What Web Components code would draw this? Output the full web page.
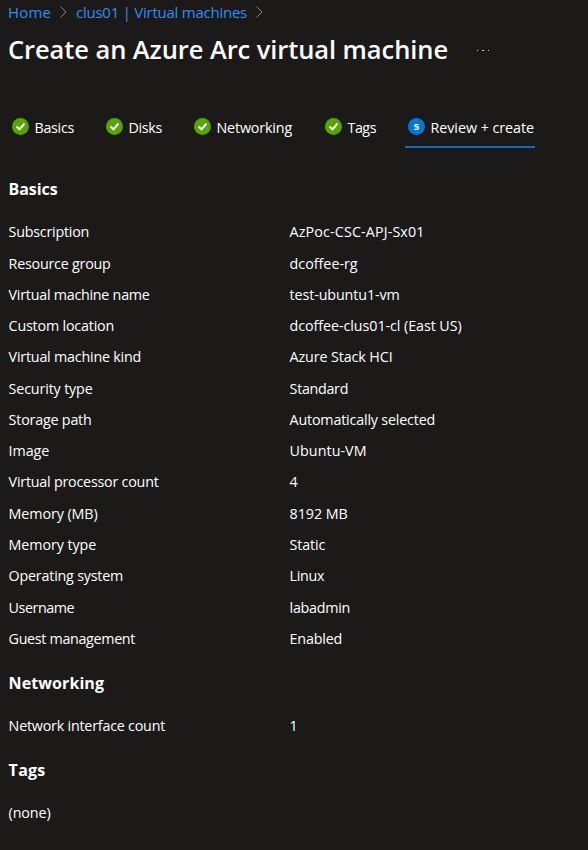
<!DOCTYPE html>
<html lang="en">
<head>
<meta charset="utf-8">
<title>Create an Azure Arc virtual machine</title>
<style>
html, body { margin: 0; background: #1b1a19; }
body { font-family: "Open Sans", "Noto Sans", sans-serif; color: #fff; }
</style>
</head>
<body>
<vm-page></vm-page>
<script>
/* Text run whose tracking is adjusted so that it is "w" pixels wide. */
class FitText extends HTMLElement {
  connectedCallback() {
    if (this.shadowRoot) return;
    this.attachShadow({ mode: 'open' }).innerHTML =
      '<style>:host{display:inline-block;white-space:pre}span{display:inline-block}</style><span><slot></slot></span>';
    const span = this.shadowRoot.querySelector('span');
    const w = parseFloat(this.getAttribute('w'));
    const n = this.textContent.length;
    if (w) span.style.letterSpacing = ((w - span.getBoundingClientRect().width) / n).toFixed(3) + 'px';
  }
}

class CrumbSeparator extends HTMLElement {
  constructor() {
    super();
    this.attachShadow({ mode: 'open' }).innerHTML = `<style>
      :host{display:block;width:7px;height:12px}svg{display:block}</style>
      <svg width="7" height="12" viewBox="0 0 7 12" fill="none" stroke="#8a8886" stroke-width="1"><path d="M.6 .7 6 6 .6 11.3"/></svg>`;
  }
}

class WizardStep extends HTMLElement {
  connectedCallback() {
    if (this.shadowRoot) return;
    const num = this.getAttribute('number');
    const icon = num
      ? `<span class="num">${num}</span>`
      : `<svg width="17" height="17" viewBox="0 0 17 17"><circle cx="8.5" cy="8.5" r="8.5" fill="#57a300"/><path d="M4.5 8.6 7.5 11.3 12.5 5.5" fill="none" stroke="#fff" stroke-width="2"/></svg>`;
    this.attachShadow({ mode: 'open' }).innerHTML = `<style>
      :host{display:flex;box-sizing:border-box;height:40px;padding:10px 3px 0;gap:5.5px;font-size:14.3px;line-height:20px;border-bottom:2px solid transparent}
      :host([number]){border-color:#0f6cbd}
      svg,.num{display:block;flex:none}
      .num{width:17px;height:17px;border-radius:50%;background:#0078d4;text-align:center;font-size:9.5px;font-weight:700;line-height:17px}
      slot{display:block}
      </style>${icon}<slot></slot>`;
  }
}

class SummarySection extends HTMLElement {
  constructor() {
    super();
    this.attachShadow({ mode: 'open' }).innerHTML = `<style>
      :host{display:block}
      h2{margin:0 0 17px;font-size:16px;font-weight:700;line-height:22px}
      </style><h2><slot name="title"></slot></h2><slot></slot>`;
  }
}

class SummaryRow extends HTMLElement {
  constructor() {
    super();
    this.attachShadow({ mode: 'open' }).innerHTML = `<style>
      :host{display:grid;grid-template-columns:281px 1fr;height:31.29px;align-items:center;font-size:14.3px;line-height:20px}
      </style><div><slot name="label"></slot></div><div><slot></slot></div>`;
  }
}

const SECTIONS = [
  ['Basics', 49, [
    ['Subscription', 80.5, 'AzPoc-CSC-APJ-Sx01', 135],
    ['Resource group', 102, 'dcoffee-rg', 68],
    ['Virtual machine name', 141, 'test-ubuntu1-vm', 110],
    ['Custom location', 105.5, 'dcoffee-clus01-cl (East US)', 172],
    ['Virtual machine kind', 132.5, 'Azure Stack HCI', 103],
    ['Security type', 84, 'Standard', 58.5],
    ['Storage path', 83, 'Automatically selected', 145.5],
    ['Image', 40.5, 'Ubuntu-VM', 77],
    ['Virtual processor count', 150, '4', 9],
    ['Memory (MB)', 89, '8192 MB', 58],
    ['Memory type', 87.5, 'Static', 35.5],
    ['Operating system', 114.5, 'Linux', 34.5],
    ['Username', 65.5, 'labadmin', 60.5],
    ['Guest management', 126.5, 'Enabled', 52.5]]],
  ['Networking', 95.5, [['Network interface count', 156.5, '1', 9]]],
  ['Tags', 37, [['(none)', 42, '', 0]]]
];

class VmPage extends HTMLElement {
  constructor() {
    super();
    const sections = SECTIONS.map(([title, tw, rows]) => `<summary-section>
      <fit-text slot="title" w="${tw}">${title}</fit-text>
      ${rows.map(([l, lw, v, vw]) => `<summary-row><fit-text slot="label" w="${lw}">${l}</fit-text>${v ? `<fit-text w="${vw}">${v}</fit-text>` : ''}</summary-row>`).join('')}
    </summary-section>`).join('');
    this.attachShadow({ mode: 'open' }).innerHTML = `<style>
      :host{display:block;box-sizing:border-box;width:588px;height:850px;padding:1px 0 0 8px;overflow:hidden}
      nav{display:flex;align-items:center;height:22px;color:#2a8ff7;font-size:15px;line-height:22px}
      nav crumb-separator{margin:0 9px 0 9px}
      header{display:flex;align-items:center;height:36px;margin-top:8px}
      h1{margin:0;font-size:25.5px;font-weight:600;line-height:36px}
      .more{display:flex;gap:4px;margin:3px 0 0 29px}
      .more i{width:1.4px;height:1.4px;background:#d2d0ce}
      .steps{display:flex;margin:41px 0 0 1px}
      main{display:flex;flex-direction:column;gap:17px;margin:29.6px 0 0 .6px}
      </style>
      <nav><fit-text w="43">Home</fit-text><crumb-separator></crumb-separator><fit-text w="171">clus01 | Virtual machines</fit-text><crumb-separator></crumb-separator></nav>
      <header><h1><fit-text w="440">Create an Azure Arc virtual machine</fit-text></h1><div class="more"><i></i><i></i><i></i></div></header>
      <div class="steps">
        <wizard-step style="width:94px"><fit-text w="39.5">Basics</fit-text></wizard-step>
        <wizard-step style="width:88px"><fit-text w="33.5">Disks</fit-text></wizard-step>
        <wizard-step style="width:131px"><fit-text w="75.5">Networking</fit-text></wizard-step>
        <wizard-step style="width:83px"><fit-text w="28.5">Tags</fit-text></wizard-step>
        <wizard-step number="5" style="width:130px"><fit-text w="103.5">Review + create</fit-text></wizard-step>
      </div>
      <main>${sections}</main>`;
  }
}

customElements.define('crumb-separator', CrumbSeparator);
customElements.define('wizard-step', WizardStep);
customElements.define('summary-section', SummarySection);
customElements.define('summary-row', SummaryRow);
customElements.define('vm-page', VmPage);
customElements.define('fit-text', FitText);
</script>
</body>
</html>
